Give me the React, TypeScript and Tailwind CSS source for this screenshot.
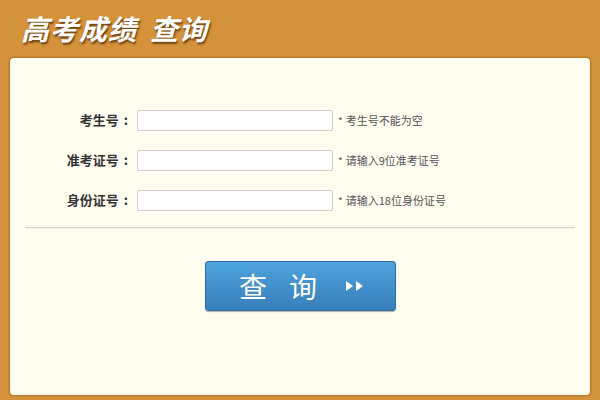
const rows = [
  { label: "考生号", hint: "考生号不能为空" },
  { label: "准考证号", hint: "请输入9位准考证号" },
  { label: "身份证号", hint: "请输入18位身份证号" },
];

const cjk = { fontFamily: '"Noto Sans CJK SC", "Liberation Sans", sans-serif' };

export default function App() {
  return (
    <div
      className="w-[600px] h-[400px] bg-[#d4923b] flex flex-col overflow-hidden"
      style={cjk}
    >
      <div className="h-[58px] pl-[21px] flex items-center">
        <h1 className="flex gap-[13px] text-[28px] font-bold text-white italic tracking-[1px] leading-none [text-shadow:1px_2px_2px_rgba(80,40,0,0.8)] -mt-[2px]">
          <span>高考成绩</span>
          <span>查询</span>
        </h1>
      </div>

      <div className="flex-1 mx-[10px] mb-[5px] bg-[#fffcf0] rounded-[4px] shadow-[0_0_2px_1px_rgba(150,90,20,0.6)] flex flex-col pt-[52px]">
        <div className="flex flex-col gap-[20px]">
          {rows.map((r) => (
            <div key={r.label} className="flex items-center h-[20px]">
              <span className="w-[118px] flex justify-end items-center text-[13px] font-bold text-[#333]">
                {r.label}
                <span className="ml-[5px]">:</span>
              </span>
              <input
                className="ml-[9px] w-[196px] h-[21px] bg-white border border-[#cfcfcf] rounded-[2px] outline-none"
                type="text"
              />
              <span className="ml-[5px] text-[11px] text-[#555] flex items-center">
                <span className="mr-[3px] text-[10px]">*</span>
                {r.hint}
              </span>
            </div>
          ))}
        </div>

        <div className="mx-[15px] mt-[17px] h-[2px] border-t border-[#d8d6c8] border-b border-b-[#f4f2e6]" />

        <div className="flex justify-center mt-[32px]">
          <button className="w-[191px] h-[50px] rounded-[3px] bg-gradient-to-b from-[#4ea2de] to-[#387fba] border border-[#2f6ea6] shadow-[0_1px_1px_rgba(0,0,0,0.3)] flex items-center justify-center text-white pl-[4px]">
            <span className="text-[28px] leading-none">查</span>
            <span className="text-[28px] leading-none ml-[22px]">询</span>
            <svg className="ml-[28px]" width="20" height="12" viewBox="0 0 20 12">
              <polygon points="1,1 8,6 1,11" fill="white" />
              <polygon points="11,1 18,6 11,11" fill="white" />
            </svg>
          </button>
        </div>
      </div>
    </div>
  );
}
